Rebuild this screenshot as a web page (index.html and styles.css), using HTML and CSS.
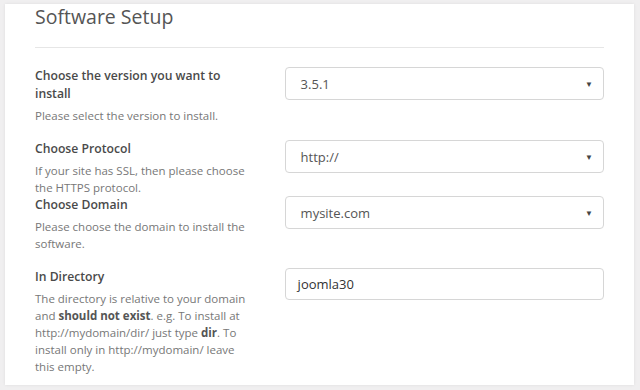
FILE: index.html
```html
<!DOCTYPE html>
<html lang="en">
<head>
    <meta charset="UTF-8">
    <meta name="viewport" content="width=device-width, initial-scale=1.0">
    <title>Software Setup</title>
    <link rel="stylesheet" href="styles.css">
</head>
<body>

<div class="card">
    <h2 class="card-title">Software Setup</h2>
    <div class="divider"></div>

    <div class="row">
        <div class="info">
            <div class="label">Choose the version you want to install</div>
            <div class="desc">Please select the version to install.</div>
        </div>
        <div class="field">
            <div class="select"><span>3.5.1</span><span class="arrow">&#9660;</span></div>
        </div>
    </div>

    <div class="row tight">
        <div class="info">
            <div class="label">Choose Protocol</div>
            <div class="desc">If your site has SSL, then please choose the HTTPS protocol.</div>
        </div>
        <div class="field">
            <div class="select"><span>http://</span><span class="arrow">&#9660;</span></div>
        </div>
    </div>

    <div class="row">
        <div class="info">
            <div class="label">Choose Domain</div>
            <div class="desc">Please choose the domain to install the software.</div>
        </div>
        <div class="field">
            <div class="select"><span>mysite.com</span><span class="arrow">&#9660;</span></div>
        </div>
    </div>

    <div class="row">
        <div class="info">
            <div class="label">In Directory</div>
            <div class="desc">The directory is relative to your domain and <b>should not exist</b>. e.g. To install at http://mydomain/dir/ just type <b>dir</b>. To install only in http://mydomain/ leave this empty.</div>
        </div>
        <div class="field">
            <div class="input">joomla30</div>
        </div>
    </div>
</div>

</body>
</html>
```

FILE: styles.css
```css
html, body {
    height: 100%;
}
body {
    margin: 0;
    padding: 4px 6px 5px 5px;
    box-sizing: border-box;
    background-color: #f0eff0;
    font-family: "Open Sans", sans-serif;
    color: #555;
}
.card {
    background: #fff;
    height: 100%;
    padding: 0 30px;
    box-sizing: border-box;
    box-shadow: 0 0 3px rgba(0, 0, 0, 0.08);
    overflow: hidden;
}
.card-title {
    margin: 0;
    font-size: 19.5px;
    font-weight: normal;
    line-height: 26px;
    color: #555;
}
.divider {
    height: 1px;
    background: #e6e6e6;
    margin: 17px 0 19px;
}
.row {
    display: flex;
    gap: 30px;
    margin-bottom: 16px;
}
.row.tight {
    margin-bottom: 0;
}
.info {
    width: 220px;
}
.label {
    font-size: 12.2px;
    font-weight: 600;
    line-height: 18px;
    color: #4a4a4a;
}
.desc {
    font-size: 11.5px;
    line-height: 17px;
    color: #777;
    margin-top: 4px;
}
.desc b {
    color: #555;
}
.field {
    width: 320px;
}
.select, .input {
    height: 33px;
    box-sizing: border-box;
    border: 1px solid #d6d6d6;
    border-radius: 4px;
    display: flex;
    align-items: center;
    justify-content: space-between;
    padding: 0 10px 0 15px;
    font-size: 13px;
    color: #555;
}
.input {
    padding-left: 12px;
    height: 32px;
    color: #333;
}
.arrow {
    font-size: 8px;
    color: #444;
}
```
